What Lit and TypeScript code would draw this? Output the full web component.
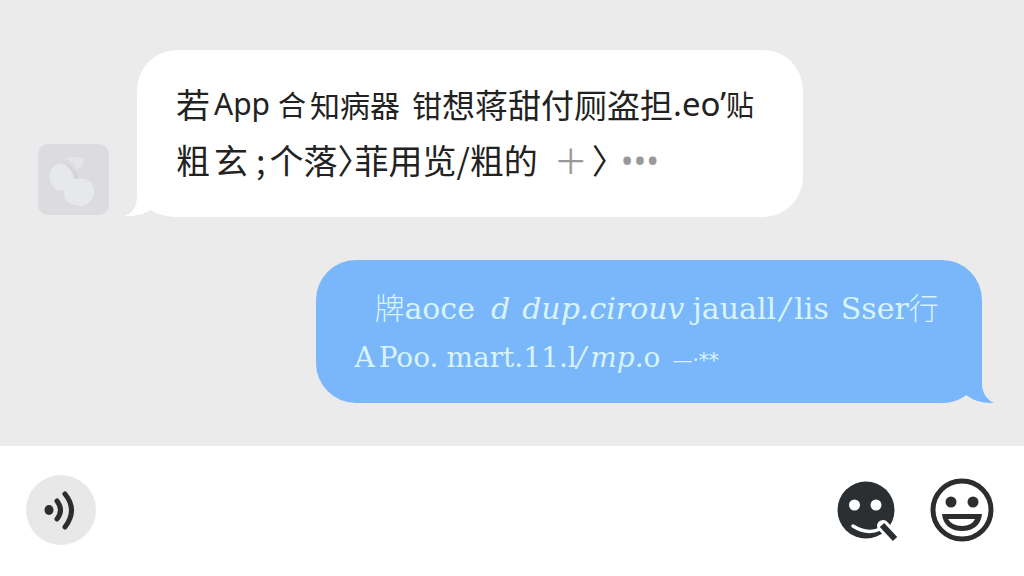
import { LitElement, html, css, svg } from "lit";
import { customElement, property } from "lit/decorators.js";

@customElement("chat-bubble")
class ChatBubble extends LitElement {
  @property({ reflect: true }) side = "left";

  static styles = css`
    :host {
      display: block;
      flex: none;
      position: relative;
      box-sizing: border-box;
      width: 65vw;
      border-radius: 40px;
    }
    :host([side="left"]) {
      background: #fff;
      color: #222;
      padding: 26px 20px 29px 39px;
    }
    :host([side="right"]) {
      background: #7ab6fa;
      color: #d8f4fb;
      padding: 24px 20px 21px 38px;
    }
    .tail {
      position: absolute;
      bottom: 0;
      width: 60px;
      height: 44px;
      overflow: visible;
    }
    :host([side="left"]) .tail {
      left: -12px;
      fill: #fff;
    }
    :host([side="right"]) .tail {
      right: -12px;
      fill: #7ab6fa;
    }
  `;

  render() {
    const left = svg`<path d="M12 0V22C12 33 8 40 0 43Q14 44 26 37Q34 43 52 44V0Z"/>`;
    const right = svg`<path d="M48 0V25C48 34 53 41 60 44Q44 45 32 36Q24 43 8 44V0Z"/>`;
    return html`
      <svg class="tail" viewBox="0 0 60 44" aria-hidden="true">
        ${this.side === "left" ? left : right}
      </svg>
      <slot></slot>
    `;
  }
}

@customElement("app-root")
class AppRoot extends LitElement {
  static styles = css`
    :host {
      display: flex;
      flex-direction: column;
      min-height: 100vh;
      background: #fff;
      font-family: "Noto Sans CJK SC", "Noto Sans", sans-serif;
    }
    .thread {
      display: flex;
      flex-direction: column;
      gap: 43px;
      padding: 50px 42px 43px 38px;
      background: #ebebeb;
    }
    .row {
      display: flex;
      align-items: flex-end;
      gap: 28px;
    }
    .row.own {
      justify-content: flex-end;
    }
    .avatar {
      flex: none;
      width: 71px;
      height: 71px;
      margin-bottom: 2px;
    }
    .line {
      position: relative;
      display: flex;
      align-items: baseline;
      margin: 0;
      white-space: pre;
    }
    .cjk {
      align-items: center;
      font-size: 34px;
      line-height: 56px;
    }
    .latin {
      font-family: "DejaVu Serif", "Noto Sans CJK SC", serif;
      font-weight: 300;
      font-size: 30px;
      line-height: 49px;
    }
    .latin.compact {
      font-size: 28px;
    }
    .roman {
      font-family: "Noto Sans", sans-serif;
    }
    .snug {
      font-size: 33px;
      line-height: 40px;
    }
    .medium {
      font-size: 30px;
      line-height: 40px;
    }
    .small {
      font-size: 28px;
      line-height: 40px;
    }
    .tiny {
      font-size: 20px;
      line-height: 30px;
    }
    .half {
      font-feature-settings: "halt";
    }
    .pale {
      color: #999;
    }
    .indent {
      margin-left: 20px;
    }
    .s4 {
      margin-left: 4px;
    }
    .s8 {
      margin-left: 8px;
    }
    .s12 {
      margin-left: 12px;
    }
    .s16 {
      margin-left: 16px;
    }
    .bar {
      flex: 1;
      display: flex;
      align-items: center;
      gap: 32px;
      padding: 0 30px 2px 26px;
    }
    .field {
      flex: 1;
      align-self: stretch;
      min-width: 0;
      border: 0;
      outline: 0;
      background: none;
      font: inherit;
      font-size: 28px;
    }
    button {
      flex: none;
      display: block;
      padding: 0;
      border: 0;
      background: none;
      cursor: pointer;
    }
    .voice {
      width: 70px;
      height: 70px;
      border-radius: 50%;
      background: #e8e8e9;
    }
    .face {
      width: 64px;
      height: 64px;
    }
    button svg {
      display: block;
      width: 100%;
      height: 100%;
    }
  `;

  render() {
    return html`
      <main class="thread">
        <div class="row">
          <svg class="avatar" viewBox="0 0 71 71" role="img" aria-label="Avatar">
            <rect width="71" height="71" rx="10" fill="#dcdbe0" />
            <path d="M27 14Q37 11 46 15Q45 23 39 25Q34 18 27 14Z" fill="#e5e5e7" />
            <path d="M24 19C14 20 10 28 12 36C14 45 20 48 27 46C24 54 30 61 39 61L44 63L49 60C56 55 58 48 54 40C51 34 43 34 36 35C37 27 32 20 24 19Z" fill="#e7e8e9" />
            <path d="M23 18Q36 20 41 34L36 35Q35 24 23 18Z" fill="#d5d4d8" />
          </svg>
          <chat-bubble side="left">
            <p class="line cjk"><span>若</span><span class="roman medium s4">App</span><span class="small s8">合</span><span class="medium s4">知病器</span><span class="medium s12">钳</span><span class="snug">想蒋甜付厕盗担</span><span class="roman snug">.eo’</span><span class="small">贴</span></p>
            <p class="line cjk"><span>粗</span><span class="s4">玄</span><span class="s8">;</span><span class="s4">个落</span><span class="half">〉</span><span>菲用览</span><span>/</span><span>粗的</span><span class="pale s16">＋</span><span class="half s4">〉</span><span class="roman pale s12">•••</span></p>
          </chat-bubble>
        </div>
        <div class="row own">
          <chat-bubble side="right">
            <p class="line latin"><span class="indent">牌</span><span>aoce</span><i class="s16">d</i><i class="s12">dup.</i><i>cirouv</i><span class="s8">jauall</span><i class="s4">/</i><span class="s4">lis</span><span class="s12">Sser</span><span>行</span></p>
            <p class="line latin compact"><span>A</span><span class="s4">Poo.</span><span class="s8">mart.11.l</span><i>/</i><i class="s4">mp.</i><span>o</span><span class="tiny s12">—·</span><span class="tiny">**</span></p>
          </chat-bubble>
        </div>
      </main>
      <footer class="bar">
        <button class="voice" aria-label="Voice message">
          <svg viewBox="0 0 70 70" fill="none" stroke="#2c2d2f" stroke-width="5" stroke-linecap="round">
            <ellipse cx="23" cy="35" rx="4.500" ry="5" fill="#2c2d2f" stroke="none" />
            <path d="M31 26Q38 35 31 44M39 19Q52 35 39 52" />
          </svg>
        </button>
        <input class="field" aria-label="Message" />
        <button class="face" aria-label="Search stickers">
          <svg viewBox="0 0 64 64">
            <circle cx="32" cy="32" r="28.500" fill="#2c2f32" />
            <circle cx="20.500" cy="27" r="5.500" fill="#fff" />
            <circle cx="42" cy="27" r="5.500" fill="#fff" />
            <path d="M19 48Q33 57 46 51" fill="none" stroke="#fff" stroke-width="3.500" stroke-linecap="round" />
            <path d="M49 48L62 62" stroke="#fff" stroke-width="12" stroke-linecap="round" />
            <path d="M48 47L61 61" stroke="#2c2f32" stroke-width="6" />
          </svg>
        </button>
        <button class="face" aria-label="Emoji">
          <svg viewBox="0 0 64 64">
            <circle cx="32" cy="32" r="29" fill="#fff" stroke="#2c2d2f" stroke-width="5" />
            <circle cx="21" cy="24" r="5.500" fill="#2c2d2f" />
            <circle cx="43" cy="24" r="5.500" fill="#2c2d2f" />
            <path d="M12 36H52C51 47 43 53 32 53S13 47 12 36Z" fill="#2c2d2f" />
            <path d="M18 41H45Q42 48 32 48T18 41Z" fill="#fff" />
          </svg>
        </button>
      </footer>
    `;
  }
}
